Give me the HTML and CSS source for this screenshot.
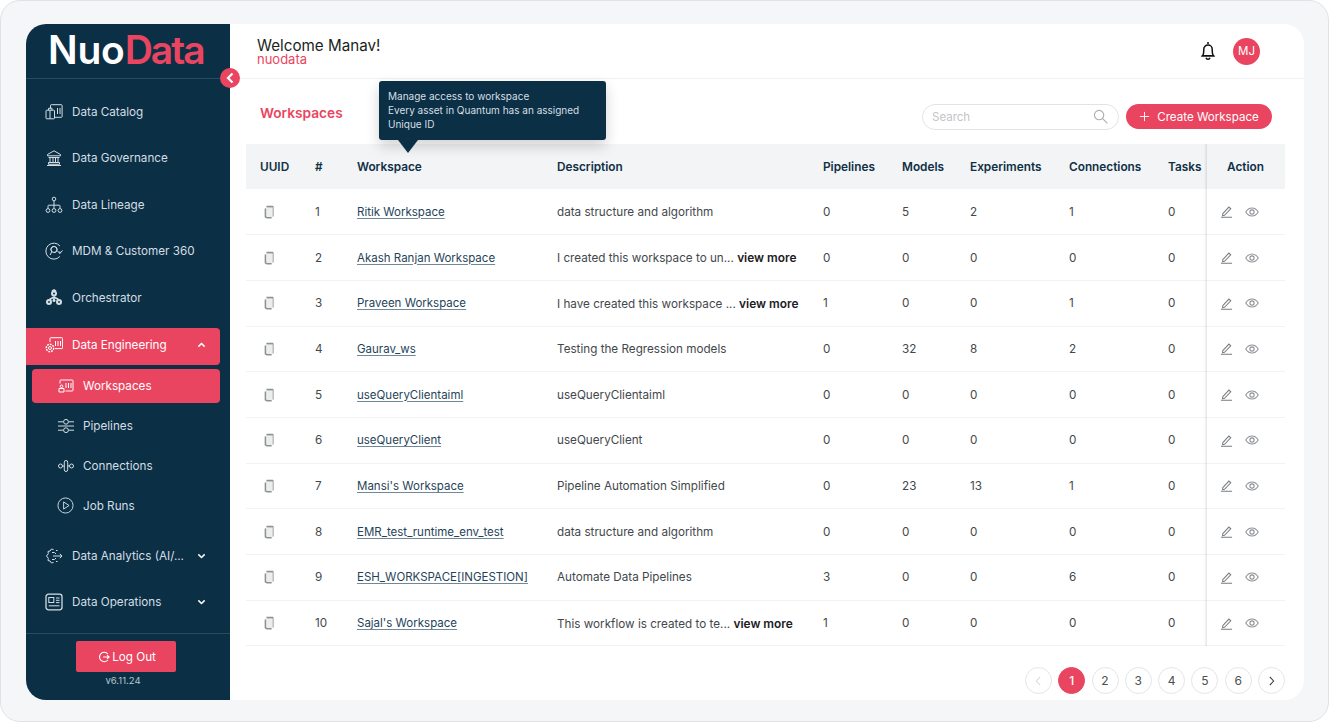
FILE: index.html
```html
<!DOCTYPE html>
<html lang="en">
<head>
<meta charset="utf-8">
<title>NuoData Workspaces</title>
<link rel="stylesheet" href="styles.css">
</head>
<body>
<svg class="sprite" width="0" height="0" aria-hidden="true">
  <symbol id="i-copy" viewBox="0 0 12 14"><path d="M3 2.800 10.200 1v10.600L8.800 13H3.800L2 12V3.200z" fill="#eceded" stroke="none"/><path d="M2.400 3.400v8.400l1.600.9h4.600M10 1.400 3.600 1.400" fill="none" stroke="currentColor" stroke-width="1.500"/><path d="M3.400 1.800h6.800v9.600" fill="none" stroke="currentColor" stroke-width="1.100" opacity=".75"/></symbol>
  <symbol id="i-edit" viewBox="0 0 14 14"><path d="M3 9.200 9.600 2.200l2 1.900-6.800 7-2 .3zM1 13.300h12" fill="none" stroke="currentColor" stroke-width="1.100"/></symbol>
  <symbol id="i-eye" viewBox="0 0 14 10"><path d="M.8 5C2.300 2.400 4.400 1 7 1s4.700 1.400 6.200 4C11.700 7.600 9.600 9 7 9S2.300 7.600.8 5z" fill="none" stroke="currentColor" stroke-width="1.100"/><circle cx="7" cy="5" r="2.100" fill="none" stroke="currentColor" stroke-width="1.100"/></symbol>
  <symbol id="i-down" viewBox="0 0 10 6"><path d="M1.500 1.200 5 4.600l3.500-3.400" fill="none" stroke="currentColor" stroke-width="1.700"/></symbol>
</svg>
<div class="frame">
  <div class="app">
    <aside class="sidebar">
      <div class="logo"><span class="logo-a">Nuo</span><span class="logo-b">Data</span></div>
      <button class="collapse" type="button" aria-label="Collapse"><svg viewBox="0 0 10 12" width="10" height="12"><path d="M7.500 1.500 3 6l4.500 4.500" fill="none" stroke="#fff" stroke-width="2.200"/></svg></button>
      <nav class="nav">
        <a class="item"><svg class="ico" viewBox="0 0 18 18"><path d="M5.500 5.500V2.500q0-.8.8-.8h10q.8 0 .8.8v11q0 .8-.8.8H9.500M12.500 5v6M15 5v6M1 8q0-.8.8-.8h6.900q.8 0 .8.8v7q0 .8-.8.8H1.800q-.8 0-.8-.8zM3.500 7.200V5.300h3.500v1.900M5 7.200v8.600" fill="none" stroke="currentColor"/></svg>Data Catalog</a>
        <a class="item"><svg class="ico" viewBox="0 0 18 18"><path d="M2.500 6.800V5.500L9 1.800l6.500 3.700v1.300zM3.500 8.500h11M5 8.500v5M8 8.500v5M10.500 8.500v5M13 8.500v5M3.500 13.500h11v1.800h-11zM2 16.500h14" fill="none" stroke="currentColor"/></svg>Data Governance</a>
        <a class="item"><svg class="ico" viewBox="0 0 18 18"><circle cx="9" cy="3" r="1.800" fill="none" stroke="currentColor"/><circle cx="3" cy="14.500" r="1.900" fill="none" stroke="currentColor"/><circle cx="9" cy="14.500" r="1.900" fill="none" stroke="currentColor"/><circle cx="15" cy="14.500" r="1.900" fill="none" stroke="currentColor"/><path d="M9 5v7.500M3 12.500V10q0-.8.800-.8h10.400q.8 0 .8.800v2.500" fill="none" stroke="currentColor"/></svg>Data Lineage</a>
        <a class="item"><svg class="ico" viewBox="0 0 18 18"><path d="M15 4A8 8 0 1 0 14.800 14.500M17.500 8.500l-2.700 3-2.300-2.600M14.800 11.500V9.500" fill="none" stroke="currentColor"/><path d="M5.200 13 7 9M9 10.600a3.100 3.100 0 1 0-2.900-1.900" fill="none" stroke="currentColor"/><circle cx="9" cy="7.500" r="3" fill="none" stroke="currentColor"/></svg>MDM &amp; Customer 360</a>
        <a class="item"><svg class="ico" viewBox="0 0 18 18"><circle cx="9" cy="4.500" r="3" fill="currentColor"/><circle cx="9" cy="4.500" r="1" fill="#0b3045"/><path d="M7 2.200 9 1l2 1.200M9 7.500v4.500M4.500 10.500 9 8l4.500 2.500" fill="none" stroke="currentColor" stroke-width="1.600"/><circle cx="4" cy="13" r="3" fill="currentColor"/><circle cx="14" cy="13" r="3" fill="currentColor"/><circle cx="4" cy="13" r=".9" fill="#0b3045"/><circle cx="14" cy="13" r=".9" fill="#0b3045"/><circle cx="9" cy="11.500" r="1.500" fill="currentColor"/></svg>Orchestrator</a>
        <a class="item item-open"><svg class="ico" viewBox="0 0 18 18"><path d="M5 6V2.500q0-.8.800-.8h11q.8 0 .8.800v9.300q0 .8-.8.800H10M10.500 5v5M13 5v5M15.500 5v5" fill="none" stroke="currentColor"/><circle cx="5" cy="12" r="1.500" fill="none" stroke="currentColor"/><circle cx="5" cy="12" r="3.700" fill="none" stroke="currentColor" stroke-width="1.500" stroke-dasharray="1.800 1"/></svg><span class="grow">Data Engineering</span><svg class="chev up" viewBox="0 0 10 6"><use href="#i-down"/></svg></a>
        <a class="sub sub-active"><svg class="ico-s" viewBox="0 0 16 14"><path d="M2 4.500V1.800q0-.8.800-.8h11.400q.8 0 .8.800v9.400q0 .8-.8.800H7.500M8 4v5M10.500 4v5M13 4v5M1 9.500h5v3.500H1z" fill="none" stroke="currentColor"/><circle cx="3.500" cy="7.300" r="1.300" fill="none" stroke="currentColor"/></svg>Workspaces</a>
        <a class="sub"><svg class="ico-s" viewBox="0 0 16 14"><path d="M0 2.800h5.500M10.500 2.800H16M0 7h16M0 11.200h5.500M10.500 11.200H16" stroke="currentColor" fill="none"/><circle cx="8" cy="2.800" r="2.400" fill="#0b3045" stroke="currentColor"/><circle cx="8" cy="11.200" r="2.400" fill="#0b3045" stroke="currentColor"/></svg>Pipelines</a>
        <a class="sub"><svg class="ico-s" viewBox="0 0 16 14"><circle cx="2.500" cy="7" r="2" fill="none" stroke="currentColor"/><circle cx="13.500" cy="7" r="2" fill="none" stroke="currentColor"/><rect x="6.300" y="1.500" width="3.400" height="11" rx="1.700" fill="none" stroke="currentColor"/><path d="M4.500 7h1.800M9.700 7h1.800" stroke="currentColor"/></svg>Connections</a>
        <a class="sub"><svg class="ico-s ico-play" viewBox="0 0 18 18"><circle cx="9" cy="9" r="8" fill="none" stroke="currentColor"/><path d="M7 5.200 12.800 9 7 12.800z" fill="none" stroke="currentColor" stroke-linejoin="round"/></svg>Job Runs</a>
        <a class="item item-analytics"><svg class="ico" viewBox="0 0 18 18"><path d="M8.500 2.500 6.500 2 5 4 3 4.500l.3 2.200L1.500 9l1.800 2.300L3 13.500l2 .5 1.500 2 2-.5M8 9h9M14.800 6.800 17 9l-2.200 2.200M7 5.500h2.500l1.500 1.500M11 3.500h1.500M7 12.500h2.500l1.500-1.500M11 14.500h1.500" fill="none" stroke="currentColor"/></svg><span class="grow">Data Analytics (AI/...</span><svg class="chev" viewBox="0 0 10 6"><use href="#i-down"/></svg></a>
        <a class="item"><svg class="ico" viewBox="0 0 18 18"><rect x="1" y="1.200" width="16" height="15.600" rx="2.500" fill="none" stroke="currentColor" stroke-width="1.300"/><rect x="3.800" y="4.500" width="5" height="5" fill="none" stroke="currentColor"/><path d="M11 5h3.500M11 7.300h3.500M11 9.600h3.500M3.800 12.800h10.700" fill="none" stroke="currentColor"/></svg><span class="grow">Data Operations</span><svg class="chev" viewBox="0 0 10 6"><use href="#i-down"/></svg></a>
      </nav>
      <div class="side-foot">
        <button class="logout" type="button"><svg viewBox="0 0 14 14" width="12" height="12"><path d="M11.500 3.500A5.500 5.500 0 1 0 11.500 10.500M6 7h7M10.500 4.800 13 7l-2.500 2.200" fill="none" stroke="currentColor" stroke-width="1.300"/></svg>Log Out</button>
        <div class="version">v6.11.24</div>
      </div>
    </aside>
    <main class="main">
      <header class="topbar">
        <div class="greeting">
          <div class="welcome">Welcome Manav!</div>
          <div class="org">nuodata</div>
        </div>
        <div class="top-right">
          <svg class="bell" viewBox="0 0 16 20" width="16" height="20"><path d="M8 1v2M2.500 14.800c1.300-1.300 1.300-3 1.300-6.500a4.200 4.200 0 0 1 8.400 0c0 3.500 0 5.200 1.300 6.500zM1.500 15h13M6 16.800a2.100 2.100 0 0 0 4 0" fill="none" stroke="#111" stroke-width="1.500"/></svg>
          <div class="avatar">MJ</div>
        </div>
      </header>
      <section class="content">
        <div class="toolbar">
          <h1 class="title">Workspaces</h1>
          <div class="tools">
            <label class="search"><span>Search</span><svg viewBox="0 0 16 16" width="15" height="15"><circle cx="6.500" cy="6.500" r="5" fill="none" stroke="#a9adb1" stroke-width="1.200"/><path d="m10.300 10.300 5 5" stroke="#a9adb1" stroke-width="1.200"/></svg></label>
            <button class="create" type="button"><svg viewBox="0 0 12 12" width="11" height="11"><path d="M6 1v10M1 6h10" stroke="#fff" fill="none"/></svg>Create Workspace</button>
          </div>
        </div>
        <div class="table-wrap">
          <div class="tooltip">Manage access to workspace<br>Every asset in Quantum has an assigned<br>Unique ID</div>
          <table class="table">
            <colgroup><col class="c1"><col class="c2"><col class="c3"><col class="c4"><col class="c5"><col class="c6"><col class="c7"><col class="c8"><col class="c9"><col class="c10"></colgroup>
            <thead><tr><th>UUID</th><th>#</th><th>Workspace</th><th>Description</th><th>Pipelines</th><th>Models</th><th>Experiments</th><th>Connections</th><th>Tasks</th><th class="act">Action</th></tr></thead>
            <tbody>
              <tr><td><svg class="copy"><use href="#i-copy"/></svg></td><td>1</td><td><a class="ws">Ritik Workspace</a></td><td>data structure and algorithm</td><td>0</td><td>5</td><td>2</td><td>1</td><td>0</td><td class="act"><svg class="edit"><use href="#i-edit"/></svg><svg class="eye"><use href="#i-eye"/></svg></td></tr>
              <tr><td><svg class="copy"><use href="#i-copy"/></svg></td><td>2</td><td><a class="ws">Akash Ranjan Workspace</a></td><td>I created this workspace to un... <b>view more</b></td><td>0</td><td>0</td><td>0</td><td>0</td><td>0</td><td class="act"><svg class="edit"><use href="#i-edit"/></svg><svg class="eye"><use href="#i-eye"/></svg></td></tr>
              <tr><td><svg class="copy"><use href="#i-copy"/></svg></td><td>3</td><td><a class="ws">Praveen Workspace</a></td><td>I have created this workspace ... <b>view more</b></td><td>1</td><td>0</td><td>0</td><td>1</td><td>0</td><td class="act"><svg class="edit"><use href="#i-edit"/></svg><svg class="eye"><use href="#i-eye"/></svg></td></tr>
              <tr><td><svg class="copy"><use href="#i-copy"/></svg></td><td>4</td><td><a class="ws">Gaurav_ws</a></td><td>Testing the Regression models</td><td>0</td><td>32</td><td>8</td><td>2</td><td>0</td><td class="act"><svg class="edit"><use href="#i-edit"/></svg><svg class="eye"><use href="#i-eye"/></svg></td></tr>
              <tr><td><svg class="copy"><use href="#i-copy"/></svg></td><td>5</td><td><a class="ws">useQueryClientaiml</a></td><td>useQueryClientaiml</td><td>0</td><td>0</td><td>0</td><td>0</td><td>0</td><td class="act"><svg class="edit"><use href="#i-edit"/></svg><svg class="eye"><use href="#i-eye"/></svg></td></tr>
              <tr><td><svg class="copy"><use href="#i-copy"/></svg></td><td>6</td><td><a class="ws">useQueryClient</a></td><td>useQueryClient</td><td>0</td><td>0</td><td>0</td><td>0</td><td>0</td><td class="act"><svg class="edit"><use href="#i-edit"/></svg><svg class="eye"><use href="#i-eye"/></svg></td></tr>
              <tr><td><svg class="copy"><use href="#i-copy"/></svg></td><td>7</td><td><a class="ws">Mansi's Workspace</a></td><td>Pipeline Automation Simplified</td><td>0</td><td>23</td><td>13</td><td>1</td><td>0</td><td class="act"><svg class="edit"><use href="#i-edit"/></svg><svg class="eye"><use href="#i-eye"/></svg></td></tr>
              <tr><td><svg class="copy"><use href="#i-copy"/></svg></td><td>8</td><td><a class="ws">EMR_test_runtime_env_test</a></td><td>data structure and algorithm</td><td>0</td><td>0</td><td>0</td><td>0</td><td>0</td><td class="act"><svg class="edit"><use href="#i-edit"/></svg><svg class="eye"><use href="#i-eye"/></svg></td></tr>
              <tr><td><svg class="copy"><use href="#i-copy"/></svg></td><td>9</td><td><a class="ws">ESH_WORKSPACE[INGESTION]</a></td><td>Automate Data Pipelines</td><td>3</td><td>0</td><td>0</td><td>6</td><td>0</td><td class="act"><svg class="edit"><use href="#i-edit"/></svg><svg class="eye"><use href="#i-eye"/></svg></td></tr>
              <tr><td><svg class="copy"><use href="#i-copy"/></svg></td><td>10</td><td><a class="ws">Sajal's Workspace</a></td><td>This workflow is created to te... <b>view more</b></td><td>1</td><td>0</td><td>0</td><td>0</td><td>0</td><td class="act"><svg class="edit"><use href="#i-edit"/></svg><svg class="eye"><use href="#i-eye"/></svg></td></tr>
            </tbody>
          </table>
        </div>
        <div class="pager">
          <span class="pg pg-dim"><svg viewBox="0 0 8 12" width="7" height="10"><path d="M6 1 1.500 6 6 11" fill="none" stroke="currentColor"/></svg></span>
          <span class="pg pg-on">1</span><span class="pg">2</span><span class="pg">3</span><span class="pg">4</span><span class="pg">5</span><span class="pg">6</span>
          <span class="pg pg-next"><svg viewBox="0 0 8 12" width="7" height="10"><path d="M2 1l4.500 5L2 11" fill="none" stroke="currentColor" stroke-width="1.300"/></svg></span>
        </div>
      </section>
    </main>
  </div>
</div>
</body>
</html>
```
FILE: styles.css
```css
* { box-sizing: border-box; }
html, body { margin: 0; padding: 0; height: 722px; overflow: hidden; }
body { font-family: Inter, "Noto Sans", sans-serif; background: #fff; color: #3c4247; }
.sprite { position: absolute; }
button { font-family: inherit; border: 0; cursor: pointer; }
a { color: inherit; }

.frame { width: 1329px; height: 722px; padding: 23px 24px 21px 25px; background: #f5f6f7; border: 1px solid #dde3e9; border-radius: 20px; }
.app { display: flex; height: 676px; border-radius: 20px; overflow: hidden; background: #fff; position: relative; }

.sidebar { width: 204px; flex: none; display: flex; flex-direction: column; background: #0b3045; color: #d3dde3; position: relative; }
.logo { height: 55px; padding-left: 22px; border-bottom: 1px solid #2a4a5d; font-size: 39px; font-weight: 600; line-height: 52px; white-space: nowrap; }
.logo-a { color: #fff; letter-spacing: -0.200px; }
.logo-b { color: #ea4560; letter-spacing: -1.950px; }
.collapse { position: absolute; left: 194px; top: 44px; width: 20px; height: 20px; padding: 0; border-radius: 50%; background: #ea4560; display: flex; align-items: center; justify-content: center; z-index: 3; }

.nav { flex: 1; display: flex; flex-direction: column; gap: 10.500px; padding-top: 14.500px; }
.item { display: flex; align-items: center; height: 36px; padding-left: 19px; padding-right: 24px; font-size: 11.700px; white-space: nowrap; }
.ico { width: 18px; height: 18px; margin-right: 9px; flex: none; }
.grow { flex: 1; }
.chev { width: 9px; height: 6px; flex: none; color: #fff; }
.chev.up { transform: rotate(180deg); }
.item-open { margin-top: 2px; height: 37px; padding-bottom: 3px; background: #ea4560; color: #fff; border-radius: 0 4px 4px 0; margin-right: 10px; padding-right: 14px; }
.sub { display: flex; align-items: center; height: 34px; margin-top: -4.500px; padding-left: 26px; margin-left: 6px; margin-right: 10px; font-size: 11.700px; border-radius: 4px; }
.sub-active { margin-top: -7px; background: #ea4560; color: #fff; }
.ico-s { width: 16px; height: 14px; margin-right: 9px; flex: none; }
.ico-play { height: 17px; width: 17px; margin-left: -1px; margin-right: 9px; }
.item-analytics { margin-top: 4.500px; }

.side-foot { height: 67px; border-top: 1px solid #2a4a5d; display: flex; flex-direction: column; align-items: center; padding: 7px 4px 0 0; }
.logout { width: 100px; height: 31px; padding: 0 0 0 2px; display: flex; align-items: center; justify-content: center; gap: 2px; background: #ea4560; color: #fff; font-size: 11.700px; border-radius: 2px; }
.version { margin: 2px 6px 0 0; font-size: 9.500px; line-height: 14px; color: #b9c6ce; }

.main { flex: 1; min-width: 0; display: flex; flex-direction: column; }
.topbar { height: 55px; flex: none; padding: 0 44px 0 27px; border-bottom: 1px solid #eff1f3; display: flex; align-items: center; justify-content: space-between; }
.greeting { padding-top: 2px; }
.welcome { font-size: 15.200px; line-height: 15px; color: #1b1f23; }
.org { font-size: 13px; line-height: 13px; color: #ea4560; }
.top-right { display: flex; align-items: center; gap: 17px; }
.avatar { width: 27px; height: 27px; border-radius: 50%; background: #ea4560; color: #fff; font-size: 11.500px; display: flex; align-items: center; justify-content: center; }

.content { flex: 1; padding: 0 19px 0 16px; display: flex; flex-direction: column; }
.toolbar { height: 65px; flex: none; display: flex; align-items: center; justify-content: space-between; padding: 0 13px 0 14px; }
.title { margin: 3px 0 0; font-size: 13.700px; font-weight: 600; color: #ea4560; }
.tools { display: flex; align-items: center; gap: 7px; margin-top: 10px; }
.search { width: 197px; height: 26px; border: 1px solid #e1e3e5; border-radius: 13px; padding: 0 10px 0 9px; display: flex; align-items: center; justify-content: space-between; font-size: 11.500px; color: #c2c5c8; }
.create { width: 146px; height: 25px; border-radius: 13px; background: #ea4560; color: #fff; font-size: 11.600px; display: flex; align-items: center; justify-content: center; gap: 7px; }

.table-wrap { position: relative; }
.table-wrap::after { content: ""; position: absolute; left: 958px; top: 0; bottom: 0; width: 3px; background: linear-gradient(to right, rgba(0,0,0,0), rgba(0,0,0,.1)); }
.tooltip { position: absolute; left: 133px; top: -63px; width: 227px; height: 59px; padding: 8px 9px; background: #0b3045; color: #d5dee4; font-size: 10px; line-height: 14px; border-radius: 3px; box-shadow: 0 6px 14px rgba(0,0,0,.18); z-index: 4; }
.tooltip::after { content: ""; position: absolute; left: 19px; top: 59px; border: 10px solid transparent; border-top: 13px solid #0b3045; border-bottom: 0; }

.table { width: 1039px; border-collapse: collapse; table-layout: fixed; font-size: 11.700px; }
.c1 { width: 55px; } .c2 { width: 42px; } .c3 { width: 200px; } .c4 { width: 266px; } .c5 { width: 79px; }
.c6 { width: 68px; } .c7 { width: 99px; } .c8 { width: 99px; } .c9 { width: 52px; } .c10 { width: 79px; }
th { height: 45px; padding: 0 0 0 14px; background: #f2f4f6; text-align: left; font-size: 11.800px; font-weight: 600; color: #0f3045; white-space: nowrap; }
td { height: 45.700px; padding: 0 0 0 14px; border-bottom: 1px solid #f1f2f4; color: #43484c; white-space: nowrap; }
th.act { text-align: center; padding: 0; }
td.act { padding-left: 14px; font-size: 0; }
td b { font-size: 11.900px; font-weight: 600; color: #1b2024; }
.ws { font-size: 11.500px; color: #1f4459; text-decoration: underline; text-underline-offset: 2px; text-decoration-color: #6f8997; }
.copy { width: 12px; height: 14px; margin-left: 3px; color: #8d9195; display: block; }
.edit { width: 13px; height: 13px; color: #777c80; vertical-align: middle; }
.eye { width: 14px; height: 10px; margin-left: 12px; color: #8d9195; vertical-align: middle; }

.pager { margin-top: 21px; display: flex; justify-content: flex-end; gap: 6.300px; }
.pg { width: 27px; height: 27px; border-radius: 50%; border: 1px solid #e4e5e7; display: flex; align-items: center; justify-content: center; font-size: 12px; color: #4a4f53; }
.pg-dim { color: #c3c6c9; }
.pg-next { color: #33383c; }
.pg-on { background: #ea4560; border-color: #ea4560; color: #fff; font-weight: 500; }
```
